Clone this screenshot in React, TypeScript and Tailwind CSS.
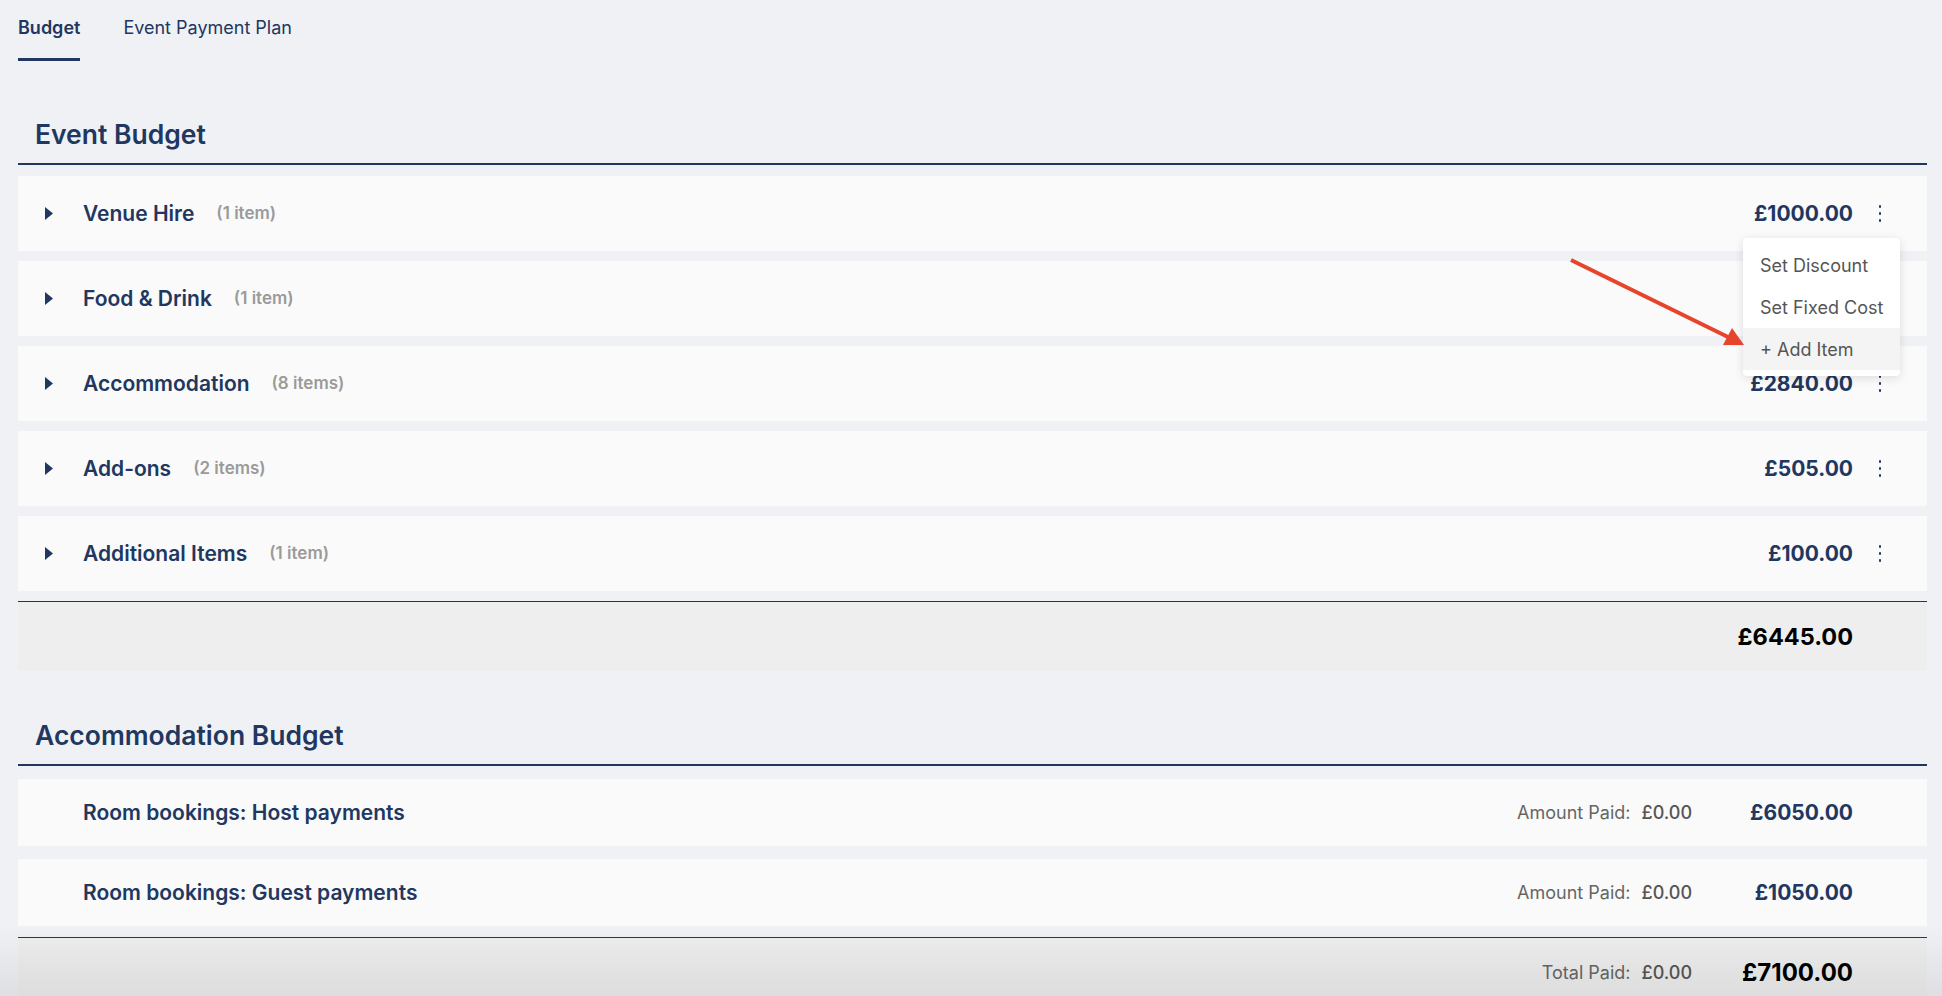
import React from 'react';

const navy = 'text-[#213760]';

const eventRows = [
  { name: 'Venue Hire', count: '(1 item)', amount: '£1000.00' },
  { name: 'Food & Drink', count: '(1 item)', amount: '£2000.00' },
  { name: 'Accommodation', count: '(8 items)', amount: '£2840.00' },
  { name: 'Add-ons', count: '(2 items)', amount: '£505.00' },
  { name: 'Additional Items', count: '(1 item)', amount: '£100.00' },
];

const accRows = [
  { name: 'Room bookings: Host payments', paid: '£0.00', amount: '£6050.00' },
  { name: 'Room bookings: Guest payments', paid: '£0.00', amount: '£1050.00' },
];

const Kebab = () => (
  <div className="w-5 h-5 flex flex-col items-center justify-center gap-[4.5px]">
    <span className="w-[2.5px] h-[2.5px] rounded-full bg-[#213760]" />
    <span className="w-[2.5px] h-[2.5px] rounded-full bg-[#213760]" />
    <span className="w-[2.5px] h-[2.5px] rounded-full bg-[#213760]" />
  </div>
);

const Caret = () => (
  <svg width="8" height="13" viewBox="0 0 8 13" className="shrink-0">
    <path d="M0 0 L8 6.5 L0 13 Z" fill="#213760" />
  </svg>
);

const RowMenu = () => (
  <div className="absolute top-[62px] right-[27px] w-[157px] bg-white rounded-[4px] shadow-[0_2px_10px_rgba(0,0,0,0.12)] py-[6px] z-10">
    <div className="h-[42px] flex items-center pl-[17px] pr-[6px] whitespace-nowrap text-[18px] text-[#555]">Set Discount</div>
    <div className="h-[42px] flex items-center pl-[17px] pr-[6px] whitespace-nowrap text-[18px] text-[#555]">Set Fixed Cost</div>
    <div className="h-[42px] flex items-center pl-[17px] pr-[6px] whitespace-nowrap text-[18px] text-[#555] bg-[#f4f4f4]">+ Add Item</div>
  </div>
);

export default function App() {
  return (
    <div
      className="relative min-h-screen bg-[#f0f1f5] pl-[18px] pr-[15px] overflow-hidden"
      style={{ fontFamily: 'Inter, "Noto Sans", sans-serif' }}
    >
      {/* Tabs */}
      <div className="flex items-end gap-[43px] h-[61px]">
        <button className={`pt-[16px] pb-[18px] border-b-[3px] border-[#213760] text-[18px] leading-6 font-semibold ${navy}`}>
          Budget
        </button>
        <button className={`pt-[16px] pb-[18px] border-b-[3px] border-transparent text-[18px] leading-6 ${navy}`}>
          Event Payment Plan
        </button>
      </div>

      {/* Event Budget */}
      <h2 className={`mt-[57px] px-[17px] pb-[13px] border-b-2 border-[#213760] text-[26.5px] leading-[32px] font-semibold ${navy}`}>
        Event Budget
      </h2>
      <div className="mt-[11px] flex flex-col gap-[10px]">
        {eventRows.map((row, idx) => (
          <div key={row.name} className="relative h-[75px] bg-[#fafafa] flex items-center pl-[27px] pr-[37px]">
            <Caret />
            <span className={`ml-[30px] text-[21px] font-semibold ${navy}`}>{row.name}</span>
            <span className="ml-[22px] text-[17px] font-semibold text-[#9a9a9a]">{row.count}</span>
            {/* row 2's amount and kebab sit under the open menu */}
            <span className={`ml-auto text-[21px] font-bold ${navy} ${idx === 1 ? 'invisible' : ''}`}>{row.amount}</span>
            <div className={`ml-[17px] ${idx === 1 ? 'invisible' : ''}`}>
              <Kebab />
            </div>
            {idx === 0 && <RowMenu />}
          </div>
        ))}
      </div>
      <div className="mt-[10px] border-t border-[#213760] h-[70px] bg-[#eeeeee] flex items-center justify-end pr-[74px]">
        <span className="text-[23.5px] font-bold text-black">£6445.00</span>
      </div>

      {/* Accommodation Budget */}
      <h2 className={`mt-[48px] px-[17px] pb-[13px] border-b-2 border-[#213760] text-[26.5px] leading-[32px] font-semibold ${navy}`}>
        Accommodation Budget
      </h2>
      <div className="mt-[13px] flex flex-col gap-[13px]">
        {accRows.map((row) => (
          <div key={row.name} className="h-[67px] bg-[#fafafa] flex items-center pl-[65px] pr-[74px]">
            <span className={`text-[21px] font-semibold ${navy}`}>{row.name}</span>
            <span className="ml-auto text-[18px] text-[#666]">Amount Paid:</span>
            <span className="ml-[11px] text-[18px] font-medium text-[#555]">{row.paid}</span>
            <span className={`w-[140px] ml-[21px] text-right text-[21px] font-bold ${navy}`}>{row.amount}</span>
          </div>
        ))}
      </div>
      <div className="mt-[11px] border-t border-[#213760] h-[70px] bg-[#eeeeee] flex items-center justify-end pr-[74px]">
        <span className="text-[18px] text-[#666]">Total Paid:</span>
        <span className="ml-[11px] text-[18px] font-medium text-[#555]">£0.00</span>
        <span className="w-[140px] ml-[21px] text-right text-[24px] font-bold text-black">£7100.00</span>
      </div>

      {/* annotation arrow */}
      <svg className="absolute left-[1560px] top-[250px] z-20 pointer-events-none" width="190" height="100" viewBox="0 0 190 100">
        <line x1="11" y1="10" x2="168" y2="87" stroke="#e8432b" strokeWidth="4" />
        <polygon points="163,95 184,95 172,78" fill="#e8432b" />
      </svg>

      {/* bottom fade of the capture */}
      <div className="fixed bottom-0 inset-x-0 h-[70px] bg-gradient-to-b from-transparent to-black/[0.07] pointer-events-none z-30" />
    </div>
  );
}
